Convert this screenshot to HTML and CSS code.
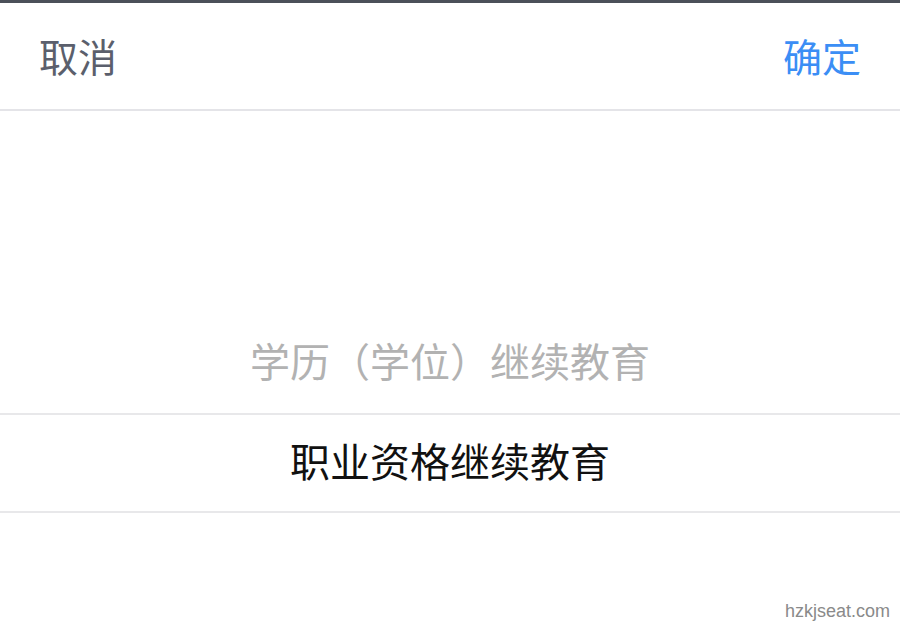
FILE: index.html
```html
<!DOCTYPE html>
<html lang="zh-CN">
<head>
    <meta charset="UTF-8">
    <meta name="viewport" content="width=device-width, initial-scale=1.0">
    <title>选择类型</title>
    <link rel="stylesheet" href="styles.css">
</head>
<body>
    <div class="sheet">
        <header class="toolbar">
            <span class="btn-cancel">取消</span>
            <span class="btn-confirm">确定</span>
        </header>
        <div class="picker">
            <div class="picker-item">学历（学位）继续教育</div>
            <div class="picker-item selected">职业资格继续教育</div>
        </div>
        <span class="watermark">hzkjseat.com</span>
    </div>
</body>
</html>
```

FILE: styles.css
```css
html, body {
    margin: 0;
    padding: 0;
    height: 100%;
}
body {
    font-family: 'Noto Sans CJK SC', 'Noto Sans', sans-serif;
    background: #fff;
    overflow: hidden;
}
.sheet {
    position: relative;
    height: 632px;
    border-top: 3px solid #4b5059;
    box-sizing: border-box;
}
.toolbar {
    height: 108px;
    display: flex;
    justify-content: space-between;
    align-items: center;
    padding: 0 39px 2px 39px;
    border-bottom: 2px solid #e4e4e8;
    font-size: 39px;
    line-height: 1;
    box-sizing: border-box;
}
.btn-cancel {
    color: #5b5f6c;
}
.btn-confirm {
    color: #3b8ef5;
}
.picker {
    display: flex;
    flex-direction: column;
    padding-top: 202px;
}
.picker-item {
    height: 100px;
    display: flex;
    align-items: center;
    justify-content: center;
    padding-bottom: 6px;
    font-size: 40px;
    color: #b2b2b2;
    box-sizing: border-box;
}
.picker-item.selected {
    color: #111;
    border-top: 2px solid #e8e8ea;
    border-bottom: 2px solid #e8e8ea;
}
.watermark {
    position: absolute;
    right: 10px;
    bottom: 10px;
    font-family: 'Liberation Sans', Arial, sans-serif;
    font-size: 18px;
    color: #8a8a8a;
}
```
